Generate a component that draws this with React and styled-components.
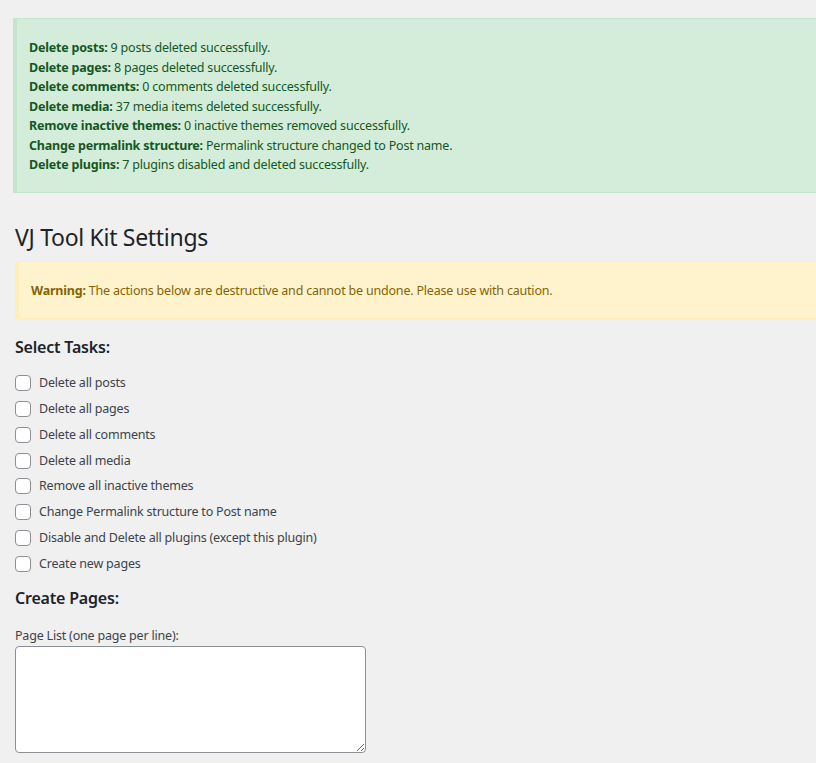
import React from "react";
import styled, { createGlobalStyle } from "styled-components";

const Global = createGlobalStyle`
  html, body {
    margin: 0;
    background: #f0f0f1;
    overflow: hidden;
  }
  body {
    font-family: "Noto Sans", "Open Sans", sans-serif;
    font-size: 12.5px;
    letter-spacing: -0.2px;
    color: #3c434a;
  }
`;

const Wrap = styled.div`
  padding: 18px 0 0 15px;
`;

const Notice = styled.div`
  margin: 0 -20px 0 -2px;
  padding: 19px 16px 17px 12px;
  background: ${(p) => (p.kind === "warning" ? "#fff3cd" : "#d4edda")};
  border: 1px solid ${(p) => (p.kind === "warning" ? "#ffeeba" : "#c3e6cb")};
  border-left: 4px solid ${(p) => (p.kind === "warning" ? "#ffeeba" : "#c3e6cb")};
  color: ${(p) => (p.kind === "warning" ? "#856404" : "#155724")};
  line-height: 19.5px;
  ${(p) => p.kind === "warning" && "margin-left: 0; padding: 19px 16px 18px 12px;"}
`;

const Line = styled.div`
  b {
    font-weight: 700;
  }
`;

const Title = styled.h1`
  margin: 29px 0 9px;
  font-size: 23px;
  font-weight: 400;
  line-height: 30px;
  letter-spacing: -0.3px;
  color: #1d2327;
`;

const SectionTitle = styled.h3`
  margin: ${(p) => (p.first ? "16px 0 15px" : "13px 0 17px")};
  font-size: 16px;
  font-weight: 600;
  line-height: 24px;
  color: #1d2327;
`;

const TaskList = styled.div`
  display: flex;
  flex-direction: column;
  gap: 7.86px;
`;

const Task = styled.label`
  display: flex;
  align-items: center;
  gap: 8px;
  height: 18px;
  line-height: 18px;
`;

const Box = styled.input.attrs({ type: "checkbox" })`
  appearance: none;
  margin: 0;
  width: 16px;
  height: 16px;
  border: 1px solid #8c8f94;
  border-radius: 4px;
  background: #fff;
`;

const FieldLabel = styled.div`
  line-height: 18px;
  margin-bottom: 1px;
`;

const Area = styled.textarea`
  display: block;
  box-sizing: border-box;
  width: 351px;
  height: 107px;
  border: 1px solid #8c8f94;
  border-radius: 4px;
  background: #fff;
  margin: 0;
`;

const results = [
  ["Delete posts:", "9 posts deleted successfully."],
  ["Delete pages:", "8 pages deleted successfully."],
  ["Delete comments:", "0 comments deleted successfully."],
  ["Delete media:", "37 media items deleted successfully."],
  ["Remove inactive themes:", "0 inactive themes removed successfully."],
  ["Change permalink structure:", "Permalink structure changed to Post name."],
  ["Delete plugins:", "7 plugins disabled and deleted successfully."],
];

const tasks = [
  "Delete all posts",
  "Delete all pages",
  "Delete all comments",
  "Delete all media",
  "Remove all inactive themes",
  "Change Permalink structure to Post name",
  "Disable and Delete all plugins (except this plugin)",
  "Create new pages",
];

export default function App() {
  return (
    <Wrap>
      <Global />
      <Notice>
        {results.map(([k, v]) => (
          <Line key={k}>
            <b>{k}</b> {v}
          </Line>
        ))}
      </Notice>
      <Title>VJ Tool Kit Settings</Title>
      <Notice kind="warning">
        <Line>
          <b>Warning:</b> The actions below are destructive and cannot be undone. Please use with caution.
        </Line>
      </Notice>
      <SectionTitle first>Select Tasks:</SectionTitle>
      <TaskList>
        {tasks.map((t) => (
          <Task key={t}>
            <Box />
            {t}
          </Task>
        ))}
      </TaskList>
      <SectionTitle>Create Pages:</SectionTitle>
      <FieldLabel>Page List (one page per line):</FieldLabel>
      <Area />
    </Wrap>
  );
}
